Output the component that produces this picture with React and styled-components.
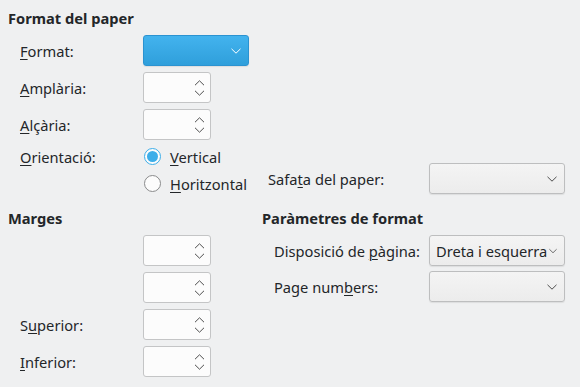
import React from 'react'
import styled, { createGlobalStyle } from 'styled-components'

const GlobalStyle = createGlobalStyle`
  html, body {
    margin: 0;
    padding: 0;
    background: #eff0f1;
  }
  body {
    font-family: "Noto Sans", "DejaVu Sans", sans-serif;
    font-size: 14.67px;
    color: #232629;
  }
`

const Chevron = ({ dir = 'down', color = '#4d4d4d', width = 10 }) => (
  <svg width={width} height={6} viewBox="0 0 10 6" fill="none">
    <path
      d={dir === 'down' ? 'M0.5 0.8 L5 5.2 L9.5 0.8' : 'M0.5 5.2 L5 0.8 L9.5 5.2'}
      stroke={color}
      strokeWidth="1"
    />
  </svg>
)

const App = () => (
  <>
    <GlobalStyle />
    <Page>
      <Heading>Format del paper</Heading>
      <PaperGrid>
        <Label>
          <span>
            <u>F</u>ormat:
          </span>
        </Label>
        <Combo $active $width={106}>
          <Chevron color="#ffffff" />
        </Combo>
        <Filler />
        <Filler />

        <Label>
          <span>
            <u>A</u>mplària:
          </span>
        </Label>
        <SpinBox />
        <Filler />
        <Filler />

        <Label>
          <span>
            <u>A</u>lçària:
          </span>
        </Label>
        <SpinBox />
        <Filler />
        <Filler />

        <Label>
          <span>
            <u>O</u>rientació:
          </span>
        </Label>
        <RadioRow>
          <Radio $checked />
          <span>
            <u>V</u>ertical
          </span>
        </RadioRow>
        <TrayCell $col={3}>
          <TrayLabel>
            Safa<u>t</u>a del paper:
          </TrayLabel>
        </TrayCell>
        <TrayCell $col={4}>
          <Combo $width={136}>
            <Chevron />
          </Combo>
        </TrayCell>

        <Filler />
        <RadioRow>
          <Radio />
          <span>
            <u>H</u>oritzontal
          </span>
        </RadioRow>
      </PaperGrid>

      <Columns>
        <div>
          <Heading>Marges</Heading>
          <MarginGrid>
            <Filler />
            <SpinBox />
            <Filler />
            <SpinBox />
            <Label>
              <span>
                S<u>u</u>perior:
              </span>
            </Label>
            <SpinBox />
            <Label>
              <span>
                <u>I</u>nferior:
              </span>
            </Label>
            <SpinBox />
          </MarginGrid>
        </div>
        <div>
          <Heading>Paràmetres de format</Heading>
          <LayoutGrid>
            <Label>
              <span>
                Disposició de <u>p</u>àgina:
              </span>
            </Label>
            <Combo $width={136}>
              <ComboText>Dreta i esquerra</ComboText>
              <Chevron width={8} />
            </Combo>
            <Label>
              <span>
                Page num<u>b</u>ers:
              </span>
            </Label>
            <Combo $width={136}>
              <Chevron />
            </Combo>
          </LayoutGrid>
        </div>
      </Columns>
    </Page>
  </>
)

const SpinBox = () => (
  <Spin>
    <SpinArrows>
      <Chevron dir="up" width={11} />
      <Chevron dir="down" width={11} />
    </SpinArrows>
  </Spin>
)

export default App

const Page = styled.div`
  width: 580px;
  height: 387px;
  box-sizing: border-box;
  padding: 9px 15px 0 8px;
  overflow: hidden;
  background: #eff0f1;

  u {
    text-decoration: underline;
    text-decoration-thickness: 1px;
    text-underline-offset: 2px;
  }
`

const Heading = styled.div`
  font-weight: 700;
  line-height: 18px;
  margin-bottom: 8px;
  white-space: nowrap;
`

const PaperGrid = styled.div`
  display: grid;
  grid-template-columns: 123px 117px 169px 136px;
  grid-template-rows: 31px 31px 31px 21px 21px;
  row-gap: 6px;
  padding-left: 12px;
`

const Filler = styled.div``

const Label = styled.div`
  display: flex;
  align-items: center;
  white-space: nowrap;
`

const TrayCell = styled.div`
  grid-column: ${(p) => p.$col};
  grid-row: 4 / span 2;
  align-self: end;
  height: 31px;
  display: flex;
  align-items: center;
`

const TrayLabel = styled.span`
  padding-left: 8px;
  white-space: nowrap;
`

const Combo = styled.div`
  box-sizing: border-box;
  width: ${(p) => p.$width}px;
  height: 31px;
  display: flex;
  align-items: center;
  justify-content: flex-end;
  gap: 2px;
  padding: 0 7px 0 6px;
  border-radius: 3px;
  border: 1px solid ${(p) => (p.$active ? '#2b93d1' : '#bdbebf')};
  background: ${(p) =>
    p.$active
      ? 'linear-gradient(#43b3ee, #2f9fdb)'
      : 'linear-gradient(#f4f4f4, #ececec)'};
  box-shadow: 0 1px 1px rgba(0, 0, 0, 0.08);
`

const ComboText = styled.span`
  flex: 1;
  white-space: nowrap;
  overflow: hidden;
`

const Spin = styled.div`
  box-sizing: border-box;
  width: 68px;
  height: 31px;
  display: flex;
  justify-content: flex-end;
  align-items: center;
  padding-right: 5px;
  background: #fcfcfc;
  border: 1px solid #c4c5c6;
  border-radius: 3px;
`

const SpinArrows = styled.div`
  display: flex;
  flex-direction: column;
  gap: 4px;
`

const RadioRow = styled.label`
  display: flex;
  align-items: center;
  gap: 9px;
  margin-left: 1px;
  white-space: nowrap;
`

const Radio = styled.span`
  box-sizing: border-box;
  width: 17px;
  height: 17px;
  border-radius: 50%;
  flex: none;
  background: #fcfcfc;
  border: 1px solid ${(p) => (p.$checked ? '#3daee9' : '#8a8b8c')};
  display: flex;
  align-items: center;
  justify-content: center;

  &::after {
    content: '';
    display: ${(p) => (p.$checked ? 'block' : 'none')};
    width: 11px;
    height: 11px;
    border-radius: 50%;
    background: #3daee9;
  }
`

const Columns = styled.div`
  display: grid;
  grid-template-columns: 254px 1fr;
  margin-top: 15px;
`

const MarginGrid = styled.div`
  display: grid;
  grid-template-columns: 123px 68px;
  grid-auto-rows: 31px;
  row-gap: 6px;
  padding-left: 12px;
`

const LayoutGrid = styled.div`
  display: grid;
  grid-template-columns: 155px 136px;
  grid-auto-rows: 31px;
  row-gap: 5px;
  padding-left: 12px;
  margin-top: 1px;
`
